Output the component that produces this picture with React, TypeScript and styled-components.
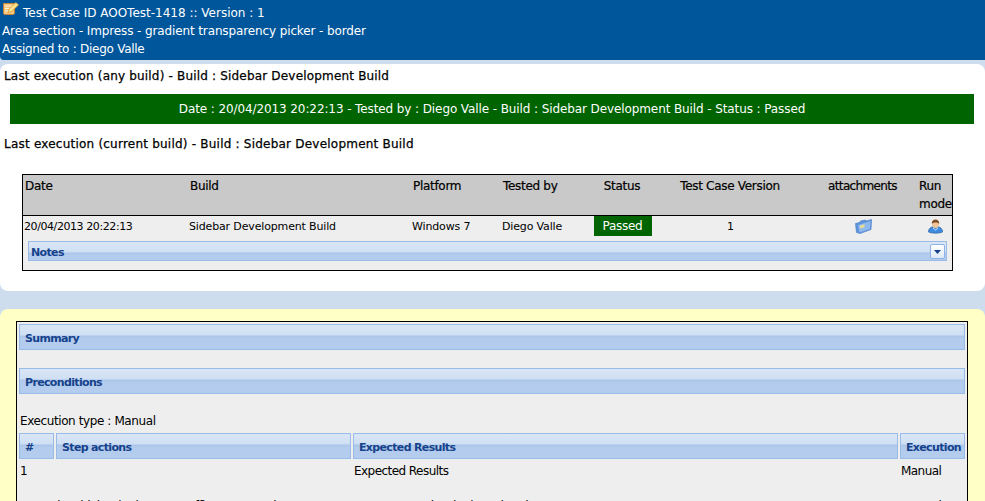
import React from 'react';
import styled, { createGlobalStyle } from 'styled-components';

const GlobalStyle = createGlobalStyle`
  html, body {
    margin: 0;
    height: 501px;
    overflow: hidden;
    background: #cddded;
    font-family: "DejaVu Sans", Tahoma, sans-serif;
    font-size: 11px;
    color: #000;
  }
  * { box-sizing: border-box; }
`;

const Header = styled.div`
  height: 60px;
  background: #00569b;
  color: #fff;
  padding: 4px 2px 0;
  border-radius: 0 0 0 4px;
  font-size: 12px;
`;

const HeaderLine = styled.div<{ $tracking: number }>`
  display: flex;
  align-items: center;
  height: 18px;
  gap: 4px;
  letter-spacing: ${(p) => p.$tracking}px;
`;

const HeaderIcon = styled.span`
  align-self: flex-start;
  margin-top: -4px;
  height: 16px;
`;

const WhitePanel = styled.div`
  margin-top: 4px;
  height: 227px;
  background: #fff;
  border-radius: 8px;
`;

const Heading = styled.div`
  padding: 3px 4px 0;
  height: 30px;
  line-height: 18px;
  font-size: 12px;
  -webkit-text-stroke: 0.25px #000;
  letter-spacing: 0.18px;
`;

const StatusBar = styled.div`
  margin: 0 11px 0 10px;
  height: 30px;
  background: #006400;
  color: #fff;
  display: flex;
  align-items: center;
  justify-content: center;
  font-size: 12px;
  letter-spacing: -0.1px;
`;

const ExecHeading = styled(Heading)`
  margin-top: 8px;
  height: 42px;
  letter-spacing: 0.22px;
`;

const ExecTable = styled.div`
  margin: 0 32px 0 22px;
  height: 97px;
  border: 1px solid #000;
  background: #eee;
`;

const columns = '165px 223px 90px 91px 60px 156px 109px 1fr';

const ExecHeadRow = styled.div`
  display: grid;
  grid-template-columns: ${columns};
  height: 41px;
  background: #c9c9c9;
  border-bottom: 1px solid #000;
  font-size: 12px;
  letter-spacing: -0.3px;
  line-height: 18px;
  -webkit-text-stroke: 0.2px #000;
`;

const HeadCell = styled.div<{ $center?: boolean }>`
  padding: 2px 2px 0;
  text-align: ${(p) => (p.$center ? 'center' : 'left')};
`;

const AttachmentsHead = styled(HeadCell)`
  letter-spacing: -0.65px;
`;

const ExecRow = styled.div`
  display: grid;
  grid-template-columns: ${columns};
  height: 21px;
  font-size: 11px;
  letter-spacing: -0.15px;
  line-height: 20px;
`;

const Cell = styled.div<{ $center?: boolean }>`
  padding-left: 1px;
  display: flex;
  align-items: center;
  justify-content: ${(p) => (p.$center ? 'center' : 'flex-start')};
`;

const DateCell = styled(Cell)`
  letter-spacing: -0.42px;
`;

const PassedCell = styled.div`
  align-self: flex-start;
  background: #006400;
  color: #fff;
  width: 58px;
  height: 20px;
  font-size: 12px;
  letter-spacing: -0.3px;
  display: flex;
  align-items: center;
  justify-content: center;
`;

const Band = styled.div`
  position: relative;
  height: 26px;
  border: 1px solid #99bbe8;
  background: linear-gradient(#dae6f6 0, #cfdff3 10px, #a9c5ea 11px, #b3cbec 13px, #b4ccee 100%);
  color: #15428b;
  font-weight: bold;
  font-size: 11px;
  letter-spacing: -0.65px;
  line-height: 28px;
  padding-left: 5px;
`;

const NotesBand = styled(Band)`
  margin: 4px 5px 0;
  height: 20px;
  line-height: 21px;
  padding-left: 2px;
`;

const ToggleButton = styled.div`
  position: absolute;
  right: 1px;
  top: 2px;
  width: 15px;
  height: 15px;
  border: 1px solid #8db2e3;
  border-radius: 2px;
  background: linear-gradient(#fff, #dfe9f6);
  display: flex;
  align-items: center;
  justify-content: center;
`;

const YellowPanel = styled.div`
  margin-top: 18px;
  height: 192px;
  overflow: hidden;
  background: #ffffc6;
  border-radius: 8px 8px 0 0;
  padding: 12px 17px 0 16px;
`;

const SpecBox = styled.div`
  height: 300px;
  border: 1px solid #000;
  background: #eee;
  padding: 2px 2px 0;
  font-size: 12px;
  letter-spacing: -0.4px;
`;

const SpecBand = styled(Band)`
  margin-bottom: 18px;
`;

const ExecType = styled.div`
  padding-left: 1px;
  height: 21px;
  line-height: 18px;
`;

const stepColumns = '35px 295px 545px 1fr';

const StepHead = styled.div`
  display: grid;
  grid-template-columns: ${stepColumns};
  gap: 2px;
`;

const StepRow = styled.div<{ $height: number }>`
  display: grid;
  grid-template-columns: ${stepColumns};
  gap: 2px;
  height: ${(p) => p.$height}px;
  padding-top: 4px;
  line-height: 16px;
  letter-spacing: -0.55px;
`;

const StepCell = styled.div`
  padding-left: 1px;
  white-space: nowrap;
`;

const NoteIcon = () => (
  <svg width="17" height="16" viewBox="0 0 17 16">
    <path d="M1.500 3.500h11v10l-1 1h-9l-1-1z" fill="#f5c67e" stroke="#c4853a" />
    <path d="M3 6h7M3 8.500h5M3 11h3" stroke="#fff3d6" />
    <path d="M6 12.500l1-3.500 7-6.500 2.500 2.500-7 6.500z" fill="#fbe58c" stroke="#d49a3a" strokeWidth="0.8" />
  </svg>
);

const FolderIcon = () => (
  <svg width="17" height="16" viewBox="0 0 17 16">
    <path d="M0.500 4.500l4-1 1-1.500 5-1 1 1 5-1.500-0.500 10-11 4-3.500-1z" fill="#5b93dc" stroke="#4f82cc" strokeWidth="0.7" />
    <path d="M3 6l12.500-4-0.500 8-10.500 3.500z" fill="#8fb9ec" />
    <path d="M5 6.500l4.500-1.300 0 3-4.500 1.300z" fill="#e9dc94" />
  </svg>
);

const UserIcon = () => (
  <svg width="15" height="15" viewBox="0 0 15 15">
    <path d="M0.500 13c0-4 3-5.500 7-5.500s7 1.500 7 5.500c-2 1.500-12 1.500-14 0z" fill="#3f8be0" stroke="#2a5f9f" strokeWidth="0.7" />
    <ellipse cx="7.500" cy="5" rx="3.500" ry="4" fill="#f0c49a" />
    <path d="M3.800 5c-0.500-6 7.900-6 7.400 0-1-2-6.400-2-7.400 0z" fill="#7d4b24" />
    <path d="M5 9l2.500 2 2.500-2" fill="none" stroke="#cfe3fa" />
  </svg>
);

const CaretIcon = () => (
  <svg width="7" height="4" viewBox="0 0 7 4">
    <path d="M0 0h7L3.500 4z" fill="#15428b" />
  </svg>
);

const App = () => (
  <>
    <GlobalStyle />
    <Header>
      <HeaderLine $tracking={0}>
        <HeaderIcon><NoteIcon /></HeaderIcon>
        <span>Test Case ID AOOTest-1418 :: Version : 1</span>
      </HeaderLine>
      <HeaderLine $tracking={-0.12}>Area section - Impress - gradient transparency picker - border</HeaderLine>
      <HeaderLine $tracking={-0.27}>Assigned to : Diego Valle</HeaderLine>
    </Header>
    <WhitePanel>
      <Heading>Last execution (any build) - Build : Sidebar Development Build</Heading>
      <StatusBar>Date : 20/04/2013 20:22:13 - Tested by : Diego Valle - Build : Sidebar Development Build - Status : Passed</StatusBar>
      <ExecHeading>Last execution (current build) - Build : Sidebar Development Build</ExecHeading>
      <ExecTable>
        <ExecHeadRow>
          <HeadCell>Date</HeadCell>
          <HeadCell>Build</HeadCell>
          <HeadCell>Platform</HeadCell>
          <HeadCell>Tested by</HeadCell>
          <HeadCell $center>Status</HeadCell>
          <HeadCell $center>Test Case Version</HeadCell>
          <AttachmentsHead $center>attachments</AttachmentsHead>
          <HeadCell>Run mode</HeadCell>
        </ExecHeadRow>
        <ExecRow>
          <DateCell>20/04/2013 20:22:13</DateCell>
          <Cell>Sidebar Development Build</Cell>
          <Cell>Windows 7</Cell>
          <Cell>Diego Valle</Cell>
          <Cell $center><PassedCell>Passed</PassedCell></Cell>
          <Cell $center>1</Cell>
          <Cell $center><FolderIcon /></Cell>
          <Cell $center><UserIcon /></Cell>
        </ExecRow>
        <NotesBand>
          Notes
          <ToggleButton><CaretIcon /></ToggleButton>
        </NotesBand>
      </ExecTable>
    </WhitePanel>
    <YellowPanel>
      <SpecBox>
        <SpecBand>Summary</SpecBand>
        <SpecBand>Preconditions</SpecBand>
        <ExecType>Execution type : Manual</ExecType>
        <StepHead>
          <Band>#</Band>
          <Band>Step actions</Band>
          <Band>Expected Results</Band>
          <Band>Execution</Band>
        </StepHead>
        <StepRow $height={35}>
          <StepCell>1</StepCell>
          <StepCell />
          <StepCell>Expected Results</StepCell>
          <StepCell>Manual</StepCell>
        </StepRow>
        <StepRow $height={33}>
          <StepCell>Open the sidebar in the Open Office Presentation</StepCell>
          <StepCell />
          <StepCell>Transparency border is updated</StepCell>
          <StepCell>Manual</StepCell>
        </StepRow>
      </SpecBox>
    </YellowPanel>
  </>
);

export default App;
